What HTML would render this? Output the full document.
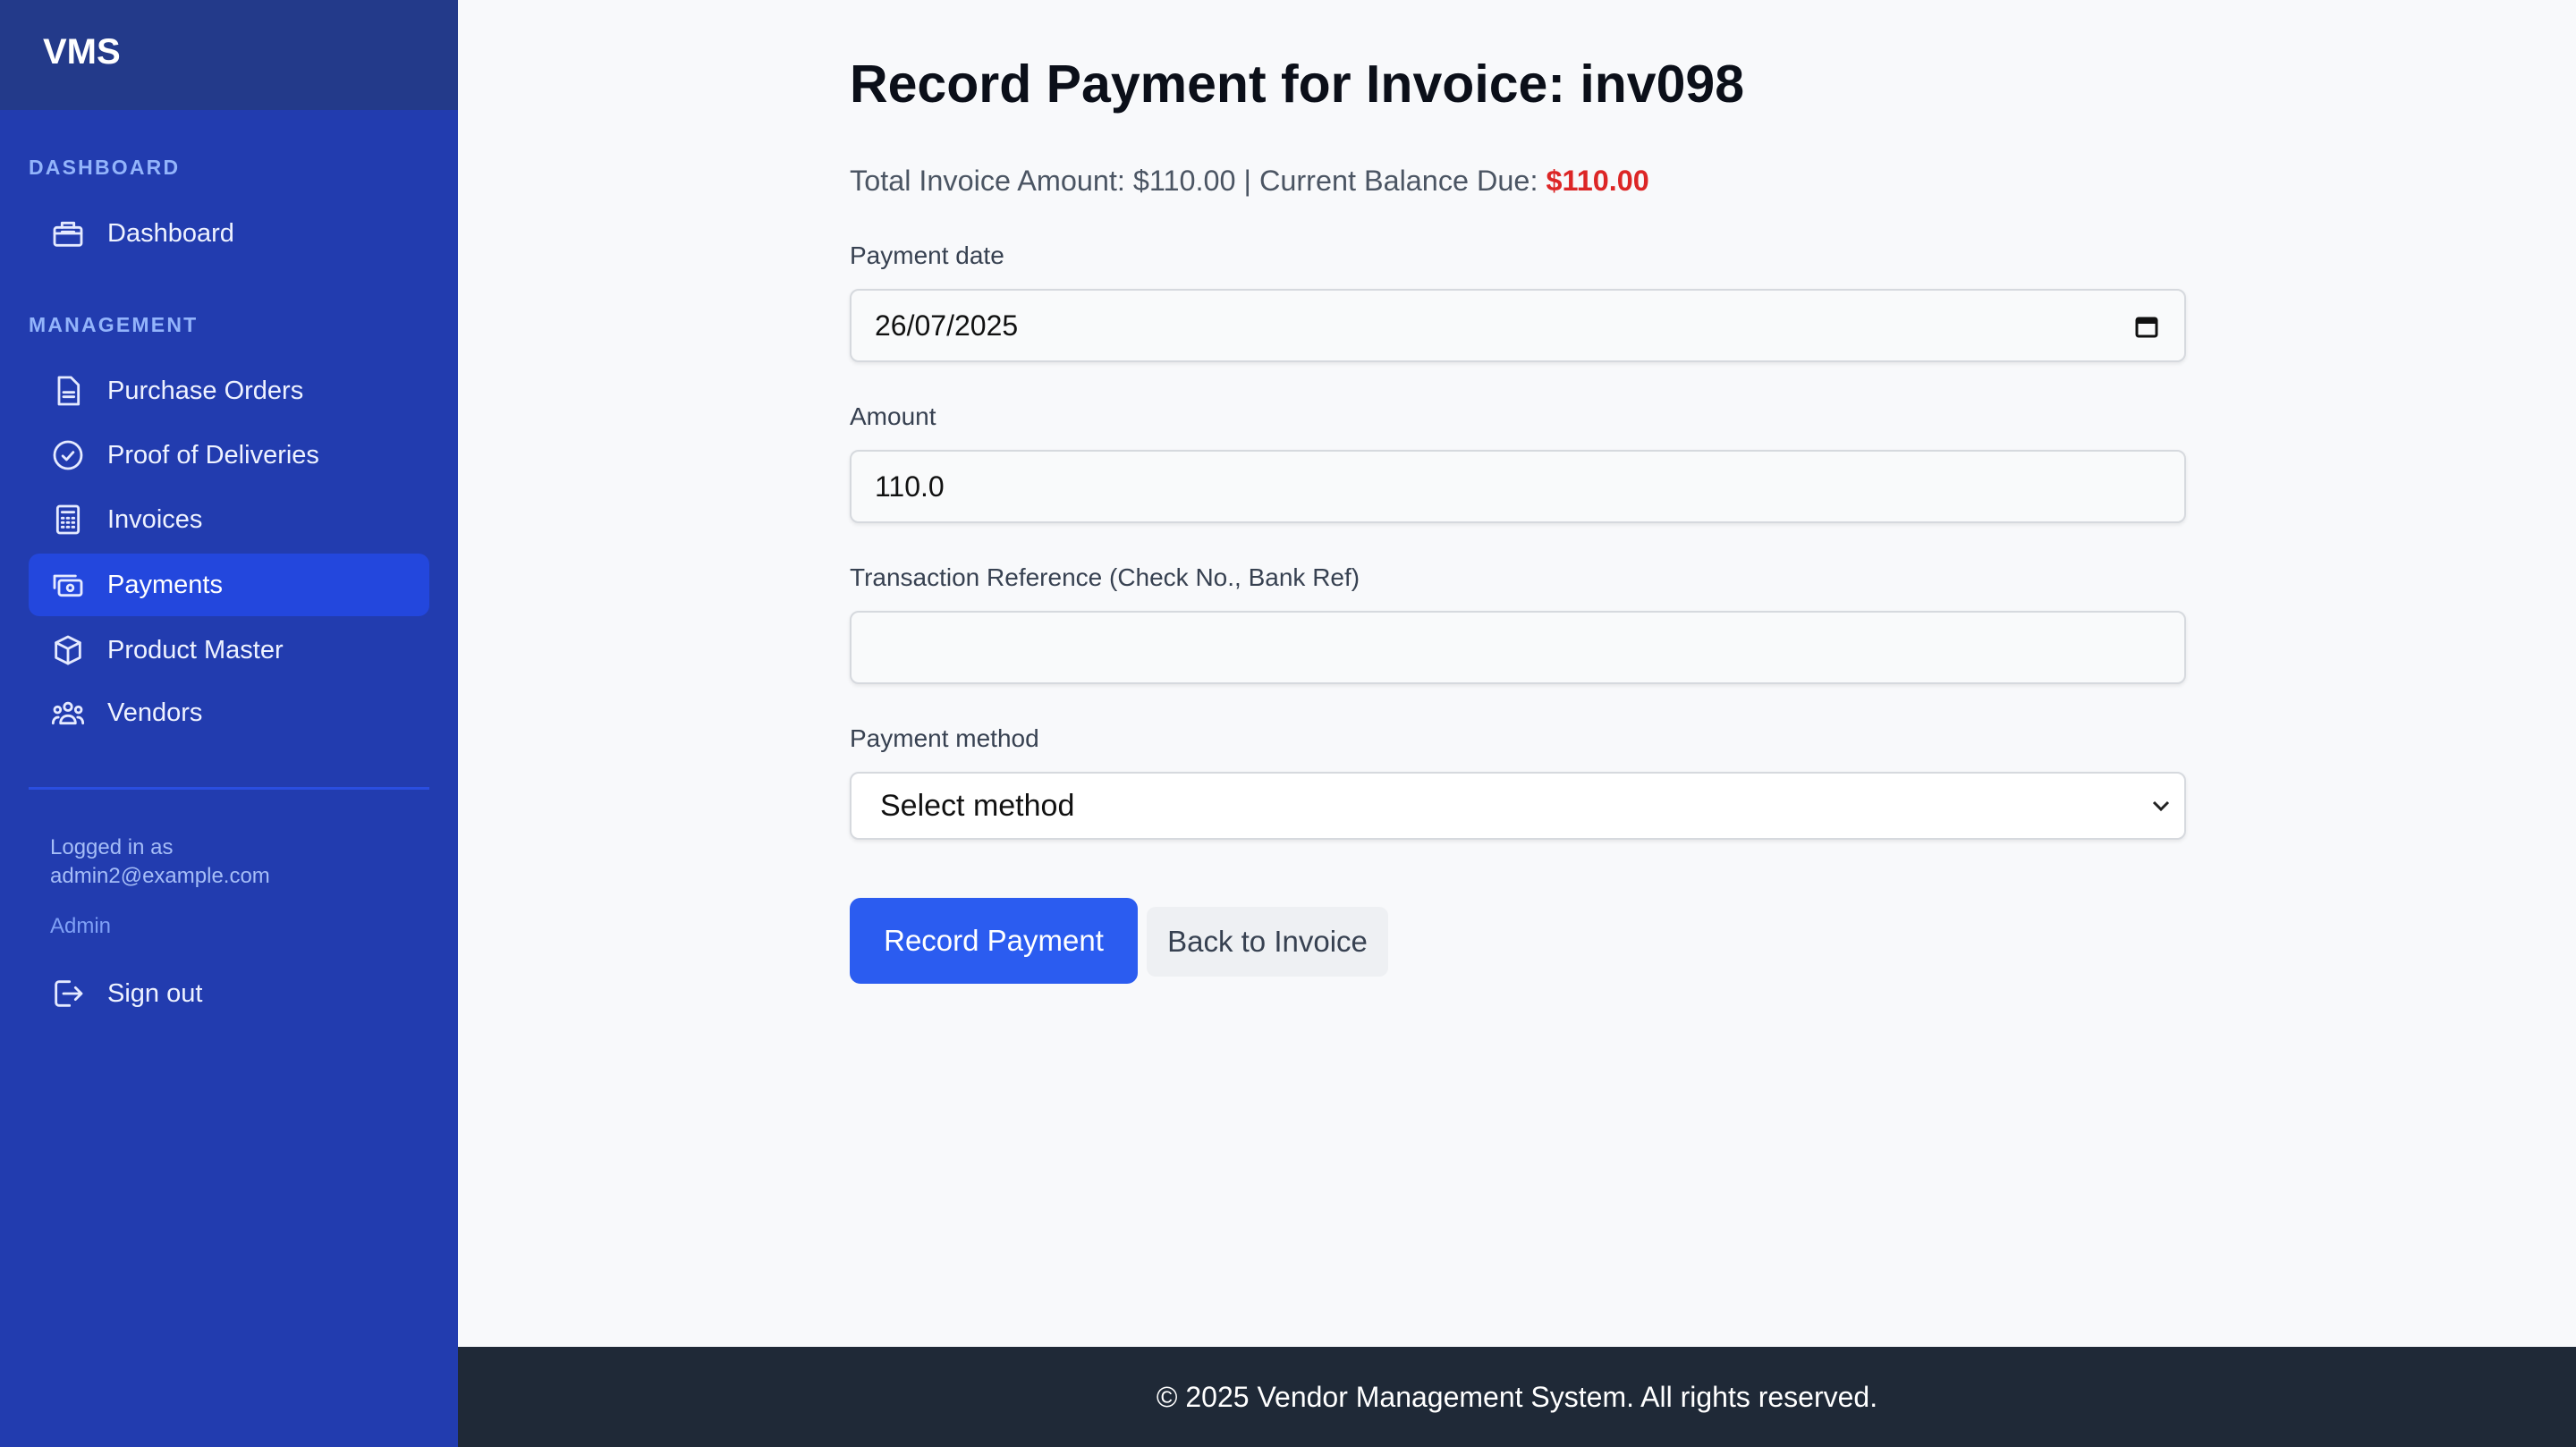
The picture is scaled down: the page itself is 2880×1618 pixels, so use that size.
<!DOCTYPE html>
<html><head><meta charset="utf-8">
<style>
*{box-sizing:border-box;margin:0;padding:0}
html{zoom:2}
body{width:1440px;height:809px;overflow:hidden;font-family:"Liberation Sans",sans-serif;background:#f8f9fb;position:relative;color:#111827}
.sb{position:absolute;left:0;top:0;width:256px;height:809px;background:#223caf}
.hd{height:61.5px;background:#233a8a;color:#fff;font-weight:bold;font-size:20px;padding-left:24px;line-height:58px}
.sec{position:absolute;left:16px;font-size:11.5px;font-weight:bold;letter-spacing:1.1px;color:#93b4fb}
.it{position:absolute;left:16px;width:224px;height:35px;border-radius:6px;color:#eef2ff;font-size:14.5px;line-height:35px;padding-left:44px}
.it.act{background:#2347dd;color:#fff}
.it svg{position:absolute;left:12px;top:7.5px;width:20px;height:20px;fill:none;stroke:#e5eaff;stroke-width:1.7;stroke-linecap:round;stroke-linejoin:round}
.div{position:absolute;left:16px;width:224px;top:440px;height:1.5px;background:#2a4ee0}
.small{position:absolute;left:28px;font-size:12px;color:#a5bdf7;line-height:16px}
.main{position:absolute;left:475px;top:0;width:747px}
h1{position:absolute;top:30px;font-size:29.5px;font-weight:bold;color:#0b0f19;white-space:nowrap}
.sum{position:absolute;top:92px;font-size:16.2px;color:#4b5563;white-space:nowrap}
.sum b{color:#dc2626}
.lbl{position:absolute;font-size:14px;color:#374151}
.inp{position:absolute;left:0;width:747px;height:41px;border:1px solid #d6d9de;border-radius:5px;background:#f9fafb;box-shadow:0 1px 2px rgba(0,0,0,.08);font-size:16px;line-height:39px;padding-left:13px;color:#111}
.btn1{position:absolute;top:502px;left:0;width:161px;height:48px;border-radius:6px;background:#2b5cf0;color:#fff;font-size:16.5px;text-align:center;line-height:48px}
.btn2{position:absolute;top:507px;left:166px;width:135px;height:39px;border-radius:5px;background:#eef0f3;color:#374151;font-size:16.5px;text-align:center;line-height:39px}
.ft{position:absolute;left:256px;top:753px;width:1184px;height:56px;background:#1f2937;color:#fff;font-size:16px;text-align:center;line-height:56px}
</style></head><body>
<div class="sb">
<div class="hd">VMS</div>
<div class="sec" style="top:87px">DASHBOARD</div>
<div class="it" style="top:113px"><svg viewBox="0 0 24 24"><rect x="3" y="8" width="18" height="12" rx="1.5"/><path d="M8 8V5h8v3M8 11h8M3 12h18"/></svg>Dashboard</div>
<div class="sec" style="top:175px">MANAGEMENT</div>
<div class="it" style="top:201px"><svg viewBox="0 0 24 24"><path d="M6 3h8l5 5v13H6z"/><path d="M9 13h7M9 16h7"/></svg>Purchase Orders</div>
<div class="it" style="top:237px"><svg viewBox="0 0 24 24"><circle cx="12" cy="12" r="9"/><path d="M8.5 12.5l2.5 2.5 4.5-5"/></svg>Proof of Deliveries</div>
<div class="it" style="top:273px"><svg viewBox="0 0 24 24"><rect x="5" y="3" width="14" height="18" rx="1.5"/><path d="M8 7h8M8 11h1M11.5 11h1M15 11h1M8 14h1M11.5 14h1M15 14h1M8 17h1M11.5 17h1M15 17h1"/></svg>Invoices</div>
<div class="it act" style="top:309.5px"><svg viewBox="0 0 24 24"><path d="M3 14V6h14"/><rect x="6" y="9" width="15" height="10" rx="1.5"/><circle cx="13.5" cy="14" r="2"/></svg>Payments</div>
<div class="it" style="top:346px"><svg viewBox="0 0 24 24"><path d="M12 3l8 4v10l-8 4-8-4V7z"/><path d="M4 7l8 4 8-4M12 11v10"/></svg>Product Master</div>
<div class="it" style="top:381px"><svg viewBox="0 0 24 24"><circle cx="12" cy="8" r="2.5"/><circle cx="5" cy="10" r="2"/><circle cx="19" cy="10" r="2"/><path d="M7 19c0-3 2-5 5-5s5 2 5 5zM2 19c0-2.5 1.5-4 3.5-4M22 19c0-2.5-1.5-4-3.5-4"/></svg>Vendors</div>
<div class="div"></div>
<div class="small" style="top:466px">Logged in as<br>admin2@example.com</div>
<div class="small" style="top:510px;color:#7fa0f5">Admin</div>
<div class="it" style="top:538px"><svg viewBox="0 0 24 24"><path d="M13 4H6a2 2 0 0 0-2 2v12a2 2 0 0 0 2 2h7M9 12h12M17 8l4 4-4 4"/></svg>Sign out</div>
</div>
<div class="main">
<h1>Record Payment for Invoice: inv098</h1>
<div class="sum">Total Invoice Amount: $110.00 | Current Balance Due: <b>$110.00</b></div>
<div class="lbl" style="top:135px">Payment date</div>
<div class="inp" style="top:161.5px">26/07/2025<svg style="position:absolute;right:14px;top:13px" width="14" height="14" viewBox="0 0 14 14"><rect x="1.5" y="2.5" width="11" height="10" rx="1" fill="none" stroke="#111" stroke-width="1.5"/><rect x="1.5" y="2.5" width="11" height="3" fill="#111"/></svg></div>
<div class="lbl" style="top:225px">Amount</div>
<div class="inp" style="top:251.5px">110.0</div>
<div class="lbl" style="top:315px">Transaction Reference (Check No., Bank Ref)</div>
<div class="inp" style="top:341.5px"></div>
<div class="lbl" style="top:405px">Payment method</div>
<div class="inp" style="top:431.5px;height:38px;line-height:36px;padding-left:16px;font-size:17px;background:#fff">Select method<svg style="position:absolute;right:8px;top:15px" width="10" height="7" viewBox="0 0 10 7"><path d="M1 1l4 4 4-4" fill="none" stroke="#222" stroke-width="1.5"/></svg></div>
<div class="btn1">Record Payment</div>
<div class="btn2">Back to Invoice</div>
</div>
<div class="ft">© 2025 Vendor Management System. All rights reserved.</div>
</body></html>
